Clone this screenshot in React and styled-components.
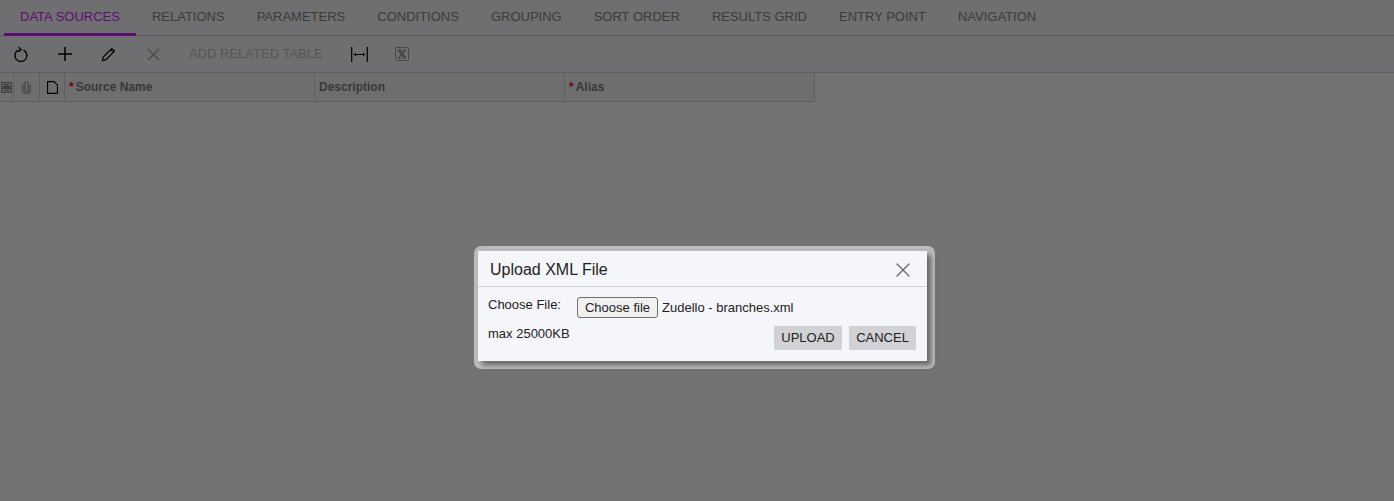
import React from 'react';
import styled, { createGlobalStyle } from 'styled-components';
import { X } from 'lucide-react';

const TABS = ['DATA SOURCES', 'RELATIONS', 'PARAMETERS', 'CONDITIONS', 'GROUPING', 'SORT ORDER', 'RESULTS GRID', 'ENTRY POINT', 'NAVIGATION'];

const GlobalStyle = createGlobalStyle`
  html, body { margin: 0; padding: 0; height: 100%; background: #737373; overflow: hidden; }
  body { font-family: "Liberation Sans", Arial, sans-serif; }
  #root { height: 100%; }
`;

const Page = styled.div`
  position: relative;
  height: 501px;
  background: #ffffff;
  overflow: hidden;
`;
const TabBar = styled.div`
  display: flex;
  height: 35px;
  padding-left: 4px;
  background: #f6f7fa;
  border-bottom: 1px solid #c9c9c9;
`;
const Tab = styled.div`
  display: flex;
  align-items: center;
  padding: 0 16px 1px;
  height: 36px;
  box-sizing: border-box;
  font-size: 13px;
  color: ${p => (p.$active ? '#d01fff' : '#858585')};
  border-bottom: ${p => (p.$active ? '3px solid #d01fff' : '3px solid transparent')};
`;
const Toolbar = styled.div`
  display: flex;
  align-items: center;
  height: 36px;
  background: #f6f7fa;
  border-bottom: 1px solid #d0d0d0;
`;
const ToolBtn = styled.div`
  display: flex;
  align-items: center;
  justify-content: center;
  flex: none;
  width: ${p => p.$w}px;
  height: 36px;
  svg { display: block; }
`;
const ToolText = styled.div`
  flex: none;
  width: 166px;
  padding: 0 0 2px 13px;
  box-sizing: border-box;
  font-size: 13px;
  color: #bdbdbd;
`;
const GridHead = styled.div`
  display: flex;
  width: 815px;
  height: 29px;
  box-sizing: border-box;
  background: #f3f4f7;
  border-bottom: 1px solid #cfcfcf;
  border-right: 1px solid #cfcfcf;
`;
const Cell = styled.div`
  display: flex;
  align-items: center;
  justify-content: ${p => (p.$icon ? 'center' : 'flex-start')};
  flex: none;
  width: ${p => p.$w}px;
  box-sizing: border-box;
  padding-left: ${p => (p.$icon ? 0 : 4)}px;
  border-right: ${p => (p.$last ? 'none' : '1px solid #d4d4d4')};
  font-size: 12px;
  font-weight: bold;
  color: #7e7e7e;
`;
const Required = styled.span`
  color: #e01818;
  margin-right: 2px;
`;
const Overlay = styled.div`
  position: absolute;
  inset: 0;
  background: rgba(0, 0, 0, 0.55);
`;
const Dialog = styled.div`
  position: absolute;
  left: 474px;
  top: 246px;
  width: 461px;
  height: 123px;
  box-sizing: border-box;
  padding: 5px 8px 8px 4px;
  background: #bababa;
  border-radius: 7px;
`;
const Panel = styled.div`
  height: 110px;
  background: #f5f6f9;
  box-shadow: 4px 4px 5px rgba(0, 0, 0, 0.45);
`;
const DialogHead = styled.div`
  display: flex;
  align-items: center;
  justify-content: space-between;
  height: 33px;
  padding: 2px 12px 0 12px;
  border-bottom: 1px solid #d2d2d2;
  font-size: 16px;
  color: #222;
  svg { display: block; }
`;
const DialogBody = styled.div`
  display: flex;
  flex-direction: column;
  padding: 0 11px 0 10px;
  font-size: 13px;
  color: #222;
`;
const FileRow = styled.div`
  display: flex;
  align-items: center;
  height: 21px;
  margin-top: 10px;
`;
const FileLabel = styled.div`
  width: 89px;
  margin-top: -7px;
`;
const FileButton = styled.div`
  display: flex;
  align-items: center;
  justify-content: center;
  width: 81px;
  height: 21px;
  box-sizing: border-box;
  border: 1px solid #6f6f6f;
  border-radius: 3px;
  background: #f0f0f0;
  color: #222;
`;
const FileName = styled.div`
  margin-left: 4px;
`;
const Footer = styled.div`
  display: flex;
  align-items: flex-start;
  justify-content: space-between;
  margin-top: 8px;
`;
const Actions = styled.div`
  display: flex;
  gap: 7px;
`;
const ActionBtn = styled.div`
  display: flex;
  align-items: center;
  justify-content: center;
  width: ${p => p.$w}px;
  height: 24px;
  padding-bottom: 2px;
  box-sizing: border-box;
  background: #d1d2d5;
  font-size: 13px;
  color: #222;
`;

const Refresh = () => (
  <svg width="16" height="17" viewBox="0 0 16 17" fill="none" stroke="#000" strokeWidth="1.4">
    <path d="M5.2 4.2a6 6 0 1 0 5.4 0" />
    <path d="M5.6 1.2 8.2 3.6 5.2 5.6" />
  </svg>
);
const Plus = () => (
  <svg width="16" height="16" viewBox="0 0 16 16" stroke="#000" strokeWidth="1.5">
    <path d="M8 1v14M1 8h14" />
  </svg>
);
const Pencil = () => (
  <svg width="15" height="15" viewBox="0 0 15 15" fill="none" stroke="#000" strokeWidth="1.2">
    <path d="M1.3 13.7 2.2 10 10.8 1.5l2.7 2.6L5 12.7z" />
    <path d="M9.7 2.6l2.7 2.7" />
  </svg>
);
const Cross = () => (
  <svg width="13" height="13" viewBox="0 0 13 13" stroke="#aaa" strokeWidth="1.5">
    <path d="M1 1l11 11M12 1 1 12" />
  </svg>
);
const FitWidth = () => (
  <svg width="17" height="15" viewBox="0 0 17 15" fill="#000" stroke="#000">
    <path d="M.7 0v15M16.3 0v15" strokeWidth="1.2" />
    <path d="M3 7.5h11" strokeWidth="1" />
    <path d="M2.5 7.5 5 5.7v3.6zM14.5 7.5 12 5.7v3.6z" stroke="none" />
  </svg>
);
const Excel = () => (
  <svg width="14" height="14" viewBox="0 0 14 14" fill="none" stroke="#a0a0a0">
    <rect x=".5" y=".5" width="13" height="13" rx="1" />
    <path d="M4 2.800 10 11.200" strokeWidth="3" />
    <path d="M10.400 2.800 3.600 11.200" strokeWidth="1.4" />
    <path d="M2.600 3h3.400M8.200 3h3.200M2.600 11h3.200M8 11h3.400" strokeWidth="1" />
  </svg>
);
const Form = () => (
  <svg width="11" height="11" viewBox="0 0 11 11" fill="none" stroke="#8c8c8c" strokeWidth="1.3">
    <path d="M.7.700h9.600v3.800H.7zM.7 6.500h9.600v3.800H.7z" />
    <path d="M3 2.600h5M3 8.400h5M2 5.500h7" />
  </svg>
);
const Clip = () => (
  <svg width="9" height="13" viewBox="0 0 9 13" fill="none" stroke="#8c8c8c" strokeWidth="1.1">
    <path d="M6.200 3v6.500a1.700 1.700 0 0 1-3.400 0V2.500a1.700 1.700 0 0 1 3.400 0" />
    <path d="M8.300 3.500v6a3.800 3.800 0 0 1-7.600 0v-7" />
  </svg>
);
const Note = () => (
  <svg width="11" height="13" viewBox="0 0 11 13" fill="none" stroke="#000" strokeWidth="1.1">
    <path d="M.6.600h6.500l3.300 3.300v8.500H.6z" />
  </svg>
);

export default function App() {
  return (
    <Page>
      <GlobalStyle />
      <TabBar>
        {TABS.map((t, i) => <Tab key={t} $active={i === 0}>{t}</Tab>)}
      </TabBar>
      <Toolbar>
        <ToolBtn $w={42}><Refresh /></ToolBtn>
        <ToolBtn $w={45}><Plus /></ToolBtn>
        <ToolBtn $w={43}><Pencil /></ToolBtn>
        <ToolBtn $w={46}><Cross /></ToolBtn>
        <ToolText>ADD RELATED TABLE</ToolText>
        <ToolBtn $w={34}><FitWidth /></ToolBtn>
        <ToolBtn $w={52}><Excel /></ToolBtn>
      </Toolbar>
      <GridHead>
        <Cell $icon $w={14}><Form /></Cell>
        <Cell $icon $w={26}><Clip /></Cell>
        <Cell $icon $w={25}><Note /></Cell>
        <Cell $w={250}><Required>*</Required>Source Name</Cell>
        <Cell $w={250}>Description</Cell>
        <Cell $w={249} $last><Required>*</Required>Alias</Cell>
      </GridHead>
      <Overlay />
      <Dialog>
        <Panel>
          <DialogHead>
            Upload XML File
            <X size={24} strokeWidth={1.3} color="#666" />
          </DialogHead>
          <DialogBody>
            <FileRow>
              <FileLabel>Choose File:</FileLabel>
              <FileButton>Choose file</FileButton>
              <FileName>Zudello - branches.xml</FileName>
            </FileRow>
            <Footer>
              <div>max 25000KB</div>
              <Actions>
                <ActionBtn $w={68}>UPLOAD</ActionBtn>
                <ActionBtn $w={67}>CANCEL</ActionBtn>
              </Actions>
            </Footer>
          </DialogBody>
        </Panel>
      </Dialog>
    </Page>
  );
}
